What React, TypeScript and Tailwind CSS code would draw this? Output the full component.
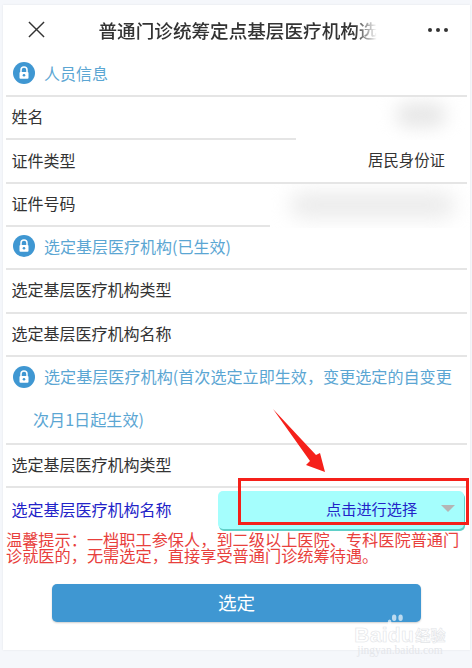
import React from 'react';

const LockBadge = () => (
  <svg viewBox="0 0 22 22" className="inline-block w-[22px] h-[22px] shrink-0 align-[-5px]">
    <circle cx="11" cy="11" r="11" fill="#3f97d2" />
    <path d="M8 10.5V8a3 3 0 0 1 6 0v2.5" fill="none" stroke="#fff" strokeWidth="1.5" />
    <rect x="6.5" y="10" width="9" height="6.8" rx="1" fill="#fff" />
    <circle cx="11" cy="13.3" r="1.3" fill="#3f97d2" />
  </svg>
);

const SectionTitle = ({ children }: { children: React.ReactNode }) => (
  <div className="flex items-center gap-[9px] h-[41px] pb-[3px] pl-[10px] text-[16px] text-[#5ba6d3]">
    <LockBadge />
    <span>{children}</span>
  </div>
);

const Divider = () => <div className="mx-[3px] h-[2px] bg-[#e5e5e5]" />;

const Row = ({ label, children }: { label: string; children?: React.ReactNode }) => (
  <div className="relative flex items-center justify-between h-[41.4px] pb-[3px] pl-[8.5px] pr-[25px] text-[16px] text-[#333]">
    <span>{label}</span>
    {children}
  </div>
);

const App = () => {
  return (
    <div className="relative h-[668px] overflow-hidden bg-[#f5f7fb] pt-[5px] px-[3px] font-['Noto_Sans_CJK_SC','Noto_Sans',sans-serif]">
      <div className="h-[645px] w-[467px] bg-white shadow-[0_0_2px_rgba(0,0,0,0.08)]">
        {/* Header */}
        <div className="flex items-center h-[49px] pl-[25px] pr-[22px]">
          <svg viewBox="0 0 18 18" className="w-[17px] h-[17px]" fill="none" stroke="#333" strokeWidth="1.5">
            <path d="M1 1l16 16M17 1L1 17" />
          </svg>
          <div className="ml-[53.5px] w-[278px] overflow-hidden whitespace-nowrap text-[18.6px] font-medium text-[#333] [mask-image:linear-gradient(to_right,#000_92%,transparent)]">
            普通门诊统筹定点基层医疗机构选定
          </div>
          <div className="ml-auto flex gap-[4px]">
            <span className="w-[4px] h-[4px] rounded-full bg-[#333]" />
            <span className="w-[4px] h-[4px] rounded-full bg-[#333]" />
            <span className="w-[4px] h-[4px] rounded-full bg-[#333]" />
          </div>
        </div>

        <SectionTitle>人员信息</SectionTitle>
        <Divider />
        <Row label="姓名">
          {/* Blurred-out value */}
          <div className="absolute right-0 top-0 h-[43px] w-[174px] bg-white overflow-hidden">
            <div className="absolute left-[100px] top-[6px] h-[24px] w-[50px] rounded-full bg-[#e6e6e6] blur-[9px]" />
          </div>
        </Row>
        <Divider />
        <Row label="证件类型">
          <span className="text-[15.4px]">居民身份证</span>
        </Row>
        <Divider />
        <Row label="证件号码">
          <div className="absolute right-0 top-0 h-[44px] w-[200px] bg-white overflow-hidden">
            <div className="absolute left-[20px] top-[8px] h-[26px] w-[165px] rounded-full bg-[#ebebeb] blur-[10px]" />
          </div>
        </Row>
        <Divider />

        <SectionTitle>选定基层医疗机构(已生效)</SectionTitle>
        <Divider />
        <Row label="选定基层医疗机构类型" />
        <Divider />
        <Row label="选定基层医疗机构名称" />
        <Divider />

        {/* Two-line heading, second line starts under the icon's edge */}
        <div className="pl-[30px] text-[16.1px] leading-[43px] h-[86px] text-[#5ba6d3] whitespace-nowrap mt-[-2px] pb-[2px]">
          <span className="ml-[-20px] mr-[9px]">
            <LockBadge />
          </span>
          选定基层医疗机构(首次选定立即生效，变更选定的自变更
          <br />
          次月1日起生效)
        </div>
        <div className="mt-[2px]">
          <Divider />
        </div>
        <Row label="选定基层医疗机构类型" />
        <Divider />

        <div className="flex items-center h-[44px] pl-[8.5px] text-[16px] text-[#2323c8]">
          <span className="w-[206.5px] pb-[3px]">选定基层医疗机构名称</span>
          <div className="relative flex items-center h-[38px] w-[246px] rounded-[5px] bg-[#a5fefd] pb-[3px] pl-[108px] text-[15.2px] shadow-[1px_2px_0_#5fd0c8]">
            点击进行选择
            <span className="absolute right-[9px] top-[14px] h-0 w-0 border-x-[7px] border-t-[7px] border-x-transparent border-t-[#b5b5b5]" />
          </div>
        </div>

        <p className="mt-[-1.4px] pl-[3px] pr-[4px] text-[16.2px] leading-[16px] text-[#e8403c]">
          温馨提示：一档职工参保人，到二级以上医院、专科医院普通门诊就医的，无需选定，直接享受普通门诊统筹待遇。
        </p>

        <div className="mt-[21px] flex h-[38px] w-[369px] ml-[49px] pb-[2px] items-center justify-center rounded-[5px] bg-[#3f97d2] text-[18.6px] text-white shadow-[0_1px_2px_rgba(0,0,0,0.2)]">
          选定
        </div>
      </div>

      {/* Red annotation */}
      <div className="absolute left-[238px] top-[478px] h-[47px] w-[231px] border-[3px] border-[#f5201a]" />
      <svg viewBox="0 0 472 668" className="absolute inset-0 w-[472px] h-[668px] pointer-events-none">
        <path d="M273 409 L316 455 L320 453 L325 472 L306 465 L310 461 Z" fill="#f5201a" />
      </svg>

      {/* Watermark */}
      <div className="absolute left-[355px] top-[614px] w-[90px] flex flex-col items-center text-white font-['Liberation_Sans',sans-serif]">
        <svg viewBox="0 0 24 14" className="w-[22px] h-[13px] ml-[-8px]" fill="#fff" opacity="0.65">
          <ellipse cx="5" cy="9" rx="2" ry="3" />
          <ellipse cx="10" cy="4" rx="2.4" ry="3.6" />
          <ellipse cx="17" cy="4" rx="2.4" ry="3.6" />
        </svg>
        <div className="flex items-center leading-[18px] text-[21px] font-bold mt-[-1px] whitespace-nowrap tracking-[0.3px] [-webkit-text-stroke:0.6px_#e2e4e7]">
          Baidu<span className="ml-[1px] text-[15px] font-['Noto_Sans_CJK_SC',sans-serif]">经验</span>
        </div>
        <div className="text-[11.5px] leading-[13px] whitespace-nowrap text-[#e4e6ea] font-['Liberation_Serif',serif]">jingyan.baidu.com</div>
      </div>
    </div>
  );
};

export default App;
